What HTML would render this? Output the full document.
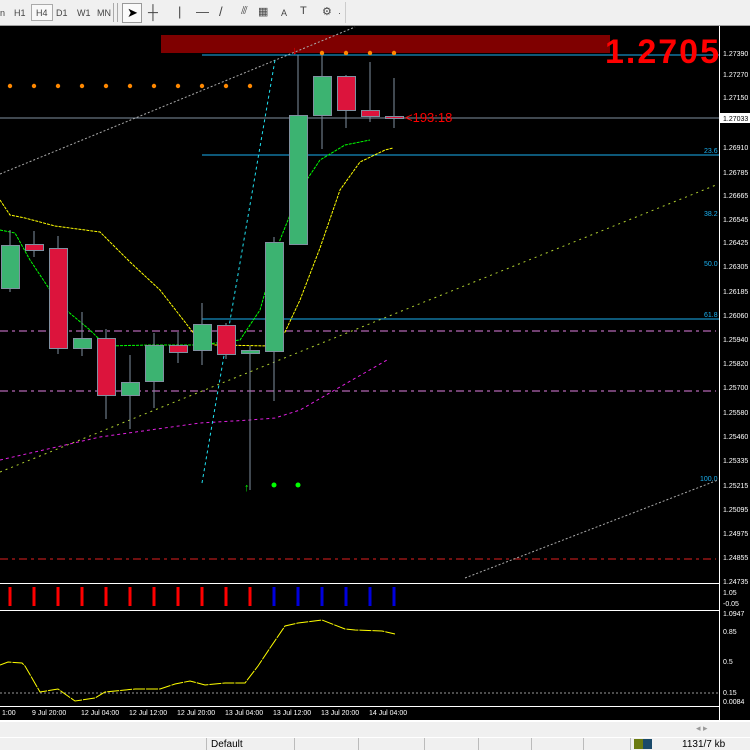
<!DOCTYPE html>
<html><head><meta charset="utf-8"><style>
body{margin:0;width:750px;height:749px;overflow:hidden;background:#f0f0f0;font-family:"Liberation Sans",sans-serif}
#tb{position:absolute;left:0;top:0;width:750px;height:25px;background:#f0f0f0;border-bottom:1px solid #a0a0a0;font-size:9px;color:#444}
#tb span{position:absolute;top:8px}
svg{position:absolute;left:0;top:0}
#st{position:absolute;left:0;top:737px;width:750px;height:12px;background:#f0f0f0;border-top:1px solid #fff;font-size:10px;color:#000}
#st span{position:absolute;top:1px}
.sep{position:absolute;top:0;width:1px;height:12px;background:#bbb}
</style></head><body>
<div id="tb">
<span style="left:0">n</span><span style="left:14px">H1</span>
<span style="left:31px;top:4px;border:1px solid #aaa;padding:3px 4px 2px;background:#f8f8f8">H4</span>
<span style="left:56px">D1</span><span style="left:77px">W1</span><span style="left:97px">MN</span>
<div style="position:absolute;left:113px;top:3px;width:3px;height:19px;border-left:1px solid #aaa;border-right:1px solid #aaa"></div>
<div style="position:absolute;left:122px;top:3px;width:18px;height:18px;border:1px solid #999;background:#fafafa"></div>
<span style="left:127px;top:5px;font-size:13px;color:#000">➤</span>
<span style="left:148px;top:4px;font-size:14px">┼</span>
<span style="left:178px;top:4px;font-size:13px">|</span>
<span style="left:196px;top:4px;font-size:13px">—</span>
<span style="left:219px;top:4px;font-size:13px">/</span>
<span style="left:241px;top:5px;font-size:11px">⫻</span>
<span style="left:258px;top:5px;font-size:11px">▦</span>
<span style="left:281px">A</span>
<span style="left:300px;top:5px;font-size:11px">T</span>
<span style="left:322px;top:5px;font-size:11px">⚙</span>
<span style="left:338px">·</span>
<div style="position:absolute;left:345px;top:2px;width:1px;height:21px;background:#ccc"></div>
</div>
<svg width="750" height="737" viewBox="0 0 750 737" style="top:0">
<rect x="0" y="26" width="750" height="694" fill="#000"/>
<rect x="0" y="720" width="750" height="17" fill="#f0f0f0"/>
<line x1="0" y1="721" x2="750" y2="721" stroke="#fff" stroke-width="2"/>
<text x="696" y="731" font-size="9" fill="#999">◂ ▸</text>
<rect x="161" y="35" width="449" height="18" fill="#7f0000"/>
<line x1="0" y1="118" x2="719" y2="118" stroke="#8090a0" stroke-width="1"/>
<line x1="202" y1="55" x2="719" y2="55" stroke="#1ab0f0"/>
<line x1="202" y1="155" x2="719" y2="155" stroke="#1ab0f0"/>
<line x1="202" y1="319" x2="719" y2="319" stroke="#1ab0f0"/>
<line x1="0" y1="331" x2="716" y2="331" stroke="#e080e0" stroke-dasharray="8,4,3,4"/>
<line x1="0" y1="391" x2="716" y2="391" stroke="#e080e0" stroke-dasharray="8,4,3,4"/>
<line x1="0" y1="559" x2="716" y2="559" stroke="#e02020" stroke-dasharray="8,4,3,4"/>
<g fill="#1ab0f0" font-size="7"><text x="704" y="153">23.6</text><text x="704" y="216">38.2</text><text x="704" y="266">50.0</text><text x="704" y="317">61.8</text><text x="700" y="481">100.0</text></g>
<polyline points="0,174 295,52 355,27" fill="none" stroke="#aaa" stroke-dasharray="2,2"/>
<line x1="465" y1="578" x2="718" y2="480" stroke="#aaa" stroke-dasharray="2,2"/>
<line x1="0" y1="472" x2="716" y2="185" stroke="#b0d030" stroke-dasharray="2,4"/>
<polyline points="0,460 100,437 200,423 250,420 275,418 300,410 387,360" fill="none" stroke="#e020e0" stroke-dasharray="3,3"/>
<line x1="202" y1="483" x2="275" y2="60" stroke="#20e0f0" stroke-dasharray="3,3"/>
<polyline points="0,200 10,215 25,218 55,226 100,232 130,262 160,290 195,335 215,345 272,346 285,332 300,300 320,248 340,190 360,162 385,150 393,148" fill="none" stroke="#ffff00" stroke-dasharray="3,1"/>
<polyline points="0,230 15,233 30,260 60,305 90,330 106,346 150,345 200,345 240,340 260,310 280,240 300,190 320,160 345,145 370,140" fill="none" stroke="#00ff00" stroke-dasharray="3,1"/>
<g fill="#ff8800"><circle cx="10" cy="86" r="2.2"/><circle cx="34" cy="86" r="2.2"/><circle cx="58" cy="86" r="2.2"/><circle cx="82" cy="86" r="2.2"/><circle cx="106" cy="86" r="2.2"/><circle cx="130" cy="86" r="2.2"/><circle cx="154" cy="86" r="2.2"/><circle cx="178" cy="86" r="2.2"/><circle cx="202" cy="86" r="2.2"/><circle cx="226" cy="86" r="2.2"/><circle cx="250" cy="86" r="2.2"/><circle cx="322" cy="53" r="2.2"/><circle cx="346" cy="53" r="2.2"/><circle cx="370" cy="53" r="2.2"/><circle cx="394" cy="53" r="2.2"/></g>
<g fill="#00ff00"><circle cx="274" cy="485" r="2.5"/><circle cx="298" cy="485" r="2.5"/></g>
<text x="244" y="491" fill="#00ff00" font-size="11" font-weight="bold">↑</text>
<text x="292" y="54" fill="#ff0000" font-size="11" font-weight="bold">↓</text>
<g stroke="#8090a0" stroke-width="1">
<line x1="10" y1="230" x2="10" y2="292"/><line x1="34" y1="231" x2="34" y2="257"/><line x1="58" y1="236" x2="58" y2="354"/><line x1="82" y1="312" x2="82" y2="356"/><line x1="106" y1="329" x2="106" y2="419"/><line x1="130" y1="355" x2="130" y2="429"/><line x1="154" y1="333" x2="154" y2="408"/><line x1="178" y1="332" x2="178" y2="363"/><line x1="202" y1="303" x2="202" y2="365"/><line x1="226" y1="323" x2="226" y2="359"/><line x1="250" y1="346" x2="250" y2="490"/><line x1="274" y1="237" x2="274" y2="401"/><line x1="298" y1="55" x2="298" y2="244"/><line x1="322" y1="55" x2="322" y2="149"/><line x1="346" y1="75" x2="346" y2="128"/><line x1="370" y1="62" x2="370" y2="122"/><line x1="394" y1="78" x2="394" y2="128"/>
</g>
<g stroke="#8090a0" stroke-width="1">
<rect x="1.5" y="245.5" width="18" height="43" fill="#3cb371"/>
<rect x="25.5" y="244.5" width="18" height="6" fill="#dc143c"/>
<rect x="49.5" y="248.5" width="18" height="100" fill="#dc143c"/>
<rect x="73.5" y="338.5" width="18" height="10" fill="#3cb371"/>
<rect x="97.5" y="338.5" width="18" height="57" fill="#dc143c"/>
<rect x="121.5" y="382.5" width="18" height="13" fill="#3cb371"/>
<rect x="145.5" y="345.5" width="18" height="36" fill="#3cb371"/>
<rect x="169.5" y="345.5" width="18" height="7" fill="#dc143c"/>
<rect x="193.5" y="324.5" width="18" height="26" fill="#3cb371"/>
<rect x="217.5" y="325.5" width="18" height="29" fill="#dc143c"/>
<rect x="241.5" y="350.5" width="18" height="3" fill="#3cb371"/>
<rect x="265.5" y="242.5" width="18" height="109" fill="#3cb371"/>
<rect x="289.5" y="115.5" width="18" height="129" fill="#3cb371"/>
<rect x="313.5" y="76.5" width="18" height="39" fill="#3cb371"/>
<rect x="337.5" y="76.5" width="18" height="34" fill="#dc143c"/>
<rect x="361.5" y="110.5" width="18" height="6" fill="#dc143c"/>
<rect x="385.5" y="116.5" width="18" height="2" fill="#dc143c"/>
</g>
<text x="405" y="122" fill="#ff0000" font-size="13">&lt;193:18</text>
<text x="605" y="63" fill="#ff0000" font-size="34" font-weight="bold" textLength="114">1.2705</text>
<line x1="719.5" y1="26" x2="719.5" y2="720" stroke="#fff"/>
<g fill="#fff" font-size="7">
<text x="723" y="56">1.27390</text><text x="723" y="77">1.27270</text><text x="723" y="100">1.27150</text>
<text x="723" y="150">1.26910</text><text x="723" y="175">1.26785</text><text x="723" y="198">1.26665</text><text x="723" y="222">1.26545</text><text x="723" y="245">1.26425</text><text x="723" y="269">1.26305</text><text x="723" y="294">1.26185</text><text x="723" y="318">1.26060</text><text x="723" y="342">1.25940</text><text x="723" y="366">1.25820</text><text x="723" y="390">1.25700</text><text x="723" y="415">1.25580</text><text x="723" y="439">1.25460</text><text x="723" y="463">1.25335</text><text x="723" y="488">1.25215</text><text x="723" y="512">1.25095</text><text x="723" y="536">1.24975</text><text x="723" y="560">1.24855</text><text x="723" y="584">1.24735</text>
<text x="723" y="595">1.05</text><text x="723" y="606">-0.05</text><text x="723" y="616">1.0947</text><text x="723" y="634">0.85</text><text x="723" y="664">0.5</text><text x="723" y="695">0.15</text><text x="723" y="704">0.0084</text>
</g>
<rect x="720" y="113" width="30" height="10" fill="#fff"/><text x="723" y="121" fill="#000" font-size="7">1.27033</text>
<line x1="0" y1="583.5" x2="719" y2="583.5" stroke="#fff"/>
<line x1="0" y1="610.5" x2="719" y2="610.5" stroke="#fff"/>
<line x1="0" y1="706.5" x2="719" y2="706.5" stroke="#fff"/>
<g stroke="#ff0000" stroke-width="3"><line x1="10" y1="587" x2="10" y2="606"/><line x1="34" y1="587" x2="34" y2="606"/><line x1="58" y1="587" x2="58" y2="606"/><line x1="82" y1="587" x2="82" y2="606"/><line x1="106" y1="587" x2="106" y2="606"/><line x1="130" y1="587" x2="130" y2="606"/><line x1="154" y1="587" x2="154" y2="606"/><line x1="178" y1="587" x2="178" y2="606"/><line x1="202" y1="587" x2="202" y2="606"/><line x1="226" y1="587" x2="226" y2="606"/><line x1="250" y1="587" x2="250" y2="606"/></g>
<g stroke="#0000dd" stroke-width="3"><line x1="274" y1="587" x2="274" y2="606"/><line x1="298" y1="587" x2="298" y2="606"/><line x1="322" y1="587" x2="322" y2="606"/><line x1="346" y1="587" x2="346" y2="606"/><line x1="370" y1="587" x2="370" y2="606"/><line x1="394" y1="587" x2="394" y2="606"/></g>
<line x1="0" y1="693" x2="719" y2="693" stroke="#999" stroke-dasharray="2,2"/>
<polyline points="0,665 8,662 22,663 25,666 40,692 58,689 65,694 75,701 95,698 105,692 125,690 135,689 160,689 175,684 190,681 205,685 225,683 245,683 258,666 270,648 285,626 298,623 322,620 345,629 355,630 382,631 395,634" fill="none" stroke="#ffff00" stroke-dasharray="12,1"/>
<g fill="#fff" font-size="7"><text x="2" y="715">1:00</text><text x="32" y="715">9 Jul 20:00</text><text x="81" y="715">12 Jul 04:00</text><text x="129" y="715">12 Jul 12:00</text><text x="177" y="715">12 Jul 20:00</text><text x="225" y="715">13 Jul 04:00</text><text x="273" y="715">13 Jul 12:00</text><text x="321" y="715">13 Jul 20:00</text><text x="369" y="715">14 Jul 04:00</text></g>
</svg>
<div id="st">
<div class="sep" style="left:206px"></div><span style="left:211px">Default</span>
<div class="sep" style="left:294px"></div><div class="sep" style="left:358px"></div><div class="sep" style="left:424px"></div><div class="sep" style="left:478px"></div><div class="sep" style="left:531px"></div><div class="sep" style="left:583px"></div><div class="sep" style="left:630px"></div>
<div style="position:absolute;left:634px;top:1px;width:18px;height:10px;background:linear-gradient(90deg,#6a7a10 50%,#1a4a6a 50%)"></div>
<span style="left:682px">1131/7 kb</span>
</div>
</body></html>
